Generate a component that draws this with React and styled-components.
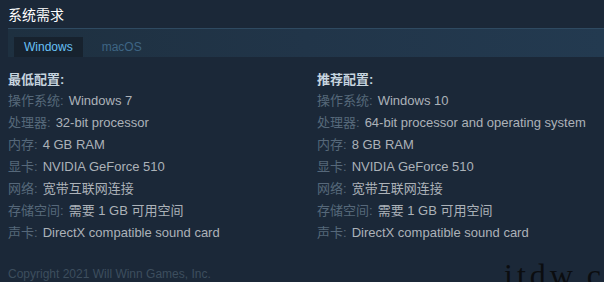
import React from 'react';
import styled, { createGlobalStyle } from 'styled-components';

const GlobalStyle = createGlobalStyle`
  html, body {
    margin: 0;
    padding: 0;
    background: #1b2838;
  }
  body {
    width: 604px;
    height: 282px;
    overflow: hidden;
    font-family: "Liberation Sans", "Noto Sans CJK SC", sans-serif;
  }
`;

const Page = styled.div`
  position: relative;
  width: 604px;
  height: 282px;
  padding: 6px 0 0 8px;
  box-sizing: border-box;
  background: #1b2838;
  overflow: hidden;
`;

const Title = styled.h2`
  margin: 0;
  height: 22px;
  font-size: 14px;
  font-weight: normal;
  color: #ffffff;
  line-height: 18px;
`;

const TabBar = styled.div`
  display: flex;
  align-items: flex-end;
  height: 28px;
  padding-left: 6px;
  border-top: 1px solid #2f4a61;
  background: linear-gradient(to right, #1e3040 0%, #213549 50%, #233a50 100%);
`;

const Tab = styled.div`
  height: 20px;
  padding: 0 10px;
  display: flex;
  align-items: center;
  font-size: 12px;
  color: ${p => (p.active ? '#67c1f5' : '#3e6584')};
  background: ${p => (p.active ? '#17222e' : 'transparent')};
  margin-right: ${p => (p.active ? '9px' : '0')};
`;

const Columns = styled.div`
  display: grid;
  grid-template-columns: 309px 1fr;
  padding-top: 14px;
`;

const Column = styled.div`
  display: flex;
  flex-direction: column;
`;

const Heading = styled.div`
  font-size: 13px;
  font-weight: bold;
  color: #c6d4df;
  line-height: 18px;
  margin-bottom: 1px;
`;

const Row = styled.div`
  font-size: 13px;
  line-height: 22px;
  color: #acb2b8;
  white-space: nowrap;
`;

const Label = styled.span`
  color: #56687a;
  margin-right: 5px;
`;

const Footer = styled.div`
  margin-top: 23px;
  font-size: 12px;
  color: #3d4e5e;
`;

const Watermark = styled.div`
  position: absolute;
  left: 504px;
  top: 255px;
  font-family: "Liberation Serif", serif;
  font-size: 32px;
  letter-spacing: 4px;
  color: #0b0d10;
  line-height: 40px;
  white-space: nowrap;
`;

const minimum = [
  ['操作系统', 'Windows 7'],
  ['处理器', '32-bit processor'],
  ['内存', '4 GB RAM'],
  ['显卡', 'NVIDIA GeForce 510'],
  ['网络', '宽带互联网连接'],
  ['存储空间', '需要 1 GB 可用空间'],
  ['声卡', 'DirectX compatible sound card'],
];

const recommended = [
  ['操作系统', 'Windows 10'],
  ['处理器', '64-bit processor and operating system'],
  ['内存', '8 GB RAM'],
  ['显卡', 'NVIDIA GeForce 510'],
  ['网络', '宽带互联网连接'],
  ['存储空间', '需要 1 GB 可用空间'],
  ['声卡', 'DirectX compatible sound card'],
];

const Spec = ({ title, rows }) => (
  <Column>
    <Heading>{title}</Heading>
    {rows.map(([label, value]) => (
      <Row key={label}>
        <Label>{label}:</Label>
        {value}
      </Row>
    ))}
  </Column>
);

const App = () => (
  <Page>
    <GlobalStyle />
    <Title>系统需求</Title>
    <TabBar>
      <Tab active>Windows</Tab>
      <Tab>macOS</Tab>
    </TabBar>
    <Columns>
      <Spec title="最低配置:" rows={minimum} />
      <Spec title="推荐配置:" rows={recommended} />
    </Columns>
    <Footer>Copyright 2021 Will Winn Games, Inc.</Footer>
    <Watermark>itdw.cn</Watermark>
  </Page>
);

export default App;
